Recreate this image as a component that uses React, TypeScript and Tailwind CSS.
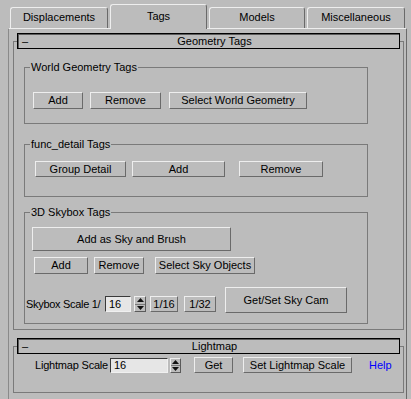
import type { ReactNode } from 'react';

const btnBase =
  'flex items-center justify-center border border-t-[#eeeeee] border-l-[#eeeeee] border-r-[#6a6a6a] border-b-[#6a6a6a] bg-[#bcbcbc] text-[11px] leading-none text-black whitespace-nowrap';

function Btn({ className, children }: { className: string; children: ReactNode }) {
  return <div className={`${btnBase} ${className}`}>{children}</div>;
}

function Field({ className, value }: { className: string; value: string }) {
  return (
    <div
      className={`flex items-center border border-t-[#3a3a3a] border-l-[#3a3a3a] border-r-[#f0f0f0] border-b-[#f0f0f0] bg-[#e6e6e6] pl-[3px] text-[11px] leading-none ${className}`}
    >
      {value}
    </div>
  );
}

function Spinner({ className }: { className: string }) {
  return (
    <div className={`flex flex-col border border-t-[#eeeeee] border-l-[#eeeeee] border-r-[#5a5a5a] border-b-[#5a5a5a] ${className}`}>
      <div className="flex flex-1 items-center justify-center border-b border-b-[#7a7a7a]">
        <svg width="7" height="4" viewBox="0 0 7 4">
          <path d="M3.5 0 L7 4 L0 4 Z" fill="#111" />
        </svg>
      </div>
      <div className="flex flex-1 items-center justify-center">
        <svg width="7" height="4" viewBox="0 0 7 4">
          <path d="M0 0 L7 0 L3.5 4 Z" fill="#111" />
        </svg>
      </div>
    </div>
  );
}

function Group({ label, className, children }: { label: string; className: string; children: ReactNode }) {
  return (
    <fieldset className={`ml-[10px] w-[344px] border border-[#7a7a7a] ${className}`}>
      <legend className="ml-[5px] px-[1px] text-[11px] leading-[13px]">{label}</legend>
      {children}
    </fieldset>
  );
}

function Rollout({ title, className, children }: { title: string; className: string; children: ReactNode }) {
  return (
    <div className={className}>
      <div className="relative z-10 ml-[4px] flex h-[16px] w-[383px] items-center border border-black bg-[#bcbcbc] text-[11px] leading-none shadow-[inset_1px_1px_0_#5c5c5c]">
        <span className="w-[12px] pl-[4px]">–</span>
        <span className="flex-1 text-center">{title}</span>
      </div>
      <div className="-mt-[8px] w-[391px] border border-[#7a7a7a]">{children}</div>
    </div>
  );
}

const tabs = [
  { label: 'Displacements', cls: 'w-[98px] h-[21px]' },
  { label: 'Tags', cls: 'w-[97px] h-[25px] -mb-px z-10 relative', active: true },
  { label: 'Models', cls: 'w-[96px] h-[21px]' },
  { label: 'Miscellaneous', cls: 'w-[98px] h-[21px]' },
];

export default function App() {
  return (
    <div className="h-[399px] w-[411px] overflow-hidden bg-[#bcbcbc] font-['Liberation_Sans',Arial,sans-serif] text-black">
      <div className="flex h-[28px] items-end gap-[2px] pl-[10px]">
        {tabs.map((t) => (
          <div
            key={t.label}
            className={`flex items-center justify-center rounded-t-[3px] border-t border-l border-r border-t-[#eeeeee] border-l-[#eeeeee] border-r-[#6a6a6a] bg-[#bcbcbc] pb-[1px] text-[11px] ${t.cls}`}
          >
            {t.label}
          </div>
        ))}
      </div>

      <div className="ml-[8px] h-[371px] w-[399px] border-t border-l border-r border-t-[#eeeeee] border-l-[#8a8a8a] border-r-[#6a6a6a] pl-[4px] pt-[4px]">
        <Rollout title="Geometry Tags" className="">
          <div className="pt-[19px] pb-[5px]">
            <Group label="World Geometry Tags" className="">
              <div className="flex gap-[7px] pt-[18px] pb-[14px] pl-[8px]">
                <Btn className="h-[17px] w-[50px]">Add</Btn>
                <Btn className="h-[17px] w-[71px]">Remove</Btn>
                <Btn className="ml-[1px] h-[17px] w-[138px]">Select World Geometry</Btn>
              </div>
            </Group>

            <Group label="func_detail Tags" className="mt-[14px]">
              <div className="flex pt-[10px] pb-[19px] pl-[10px]">
                <Btn className="h-[16px] w-[91px]">Group Detail</Btn>
                <Btn className="ml-[6px] h-[16px] w-[93px]">Add</Btn>
                <Btn className="ml-[14px] h-[16px] w-[84px]">Remove</Btn>
              </div>
            </Group>

            <Group label="3D Skybox Tags" className="mt-[9px]">
              <div className="pt-[8px] pb-[10px]">
                <div className="pl-[7px]">
                  <Btn className="h-[24px] w-[199px]">Add as Sky and Brush</Btn>
                </div>
                <div className="mt-[6px] flex pl-[9px]">
                  <Btn className="h-[17px] w-[54px]">Add</Btn>
                  <Btn className="ml-[6px] h-[17px] w-[50px]">Remove</Btn>
                  <Btn className="ml-[11px] h-[17px] w-[100px]">Select Sky Objects</Btn>
                </div>
                <div className="mt-[13px] flex items-end pl-[1px]">
                  <div className="mb-[1px] flex h-[16px] items-center">
                    <span className="w-[79px] whitespace-nowrap text-[11px] tracking-[-0.3px]">Skybox Scale 1/</span>
                    <Field className="h-[16px] w-[26px]" value="16" />
                    <Spinner className="ml-[3px] h-[16px] w-[12px]" />
                    <Btn className="ml-[4px] h-[16px] w-[28px]">1/16</Btn>
                    <Btn className="ml-[6px] h-[16px] w-[32px]">1/32</Btn>
                  </div>
                  <Btn className="ml-[9px] h-[26px] w-[122px]">Get/Set Sky Cam</Btn>
                </div>
              </div>
            </Group>
          </div>
        </Rollout>

        <Rollout title="Lightmap" className="mt-[8px]">
          <div className="flex items-center pt-[10px] pb-[18px] pl-[21px]">
            <span className="w-[75px] whitespace-nowrap text-[11px] tracking-[-0.2px]">Lightmap Scale</span>
            <Field className="h-[15px] w-[58px]" value="16" />
            <Spinner className="ml-[2px] h-[15px] w-[11px]" />
            <Btn className="ml-[13px] h-[16px] w-[39px]">Get</Btn>
            <Btn className="ml-[10px] h-[16px] w-[109px]">Set Lightmap Scale</Btn>
            <span className="ml-[17px] text-[11px] text-[#0000ff]">Help</span>
          </div>
        </Rollout>
      </div>
    </div>
  );
}
